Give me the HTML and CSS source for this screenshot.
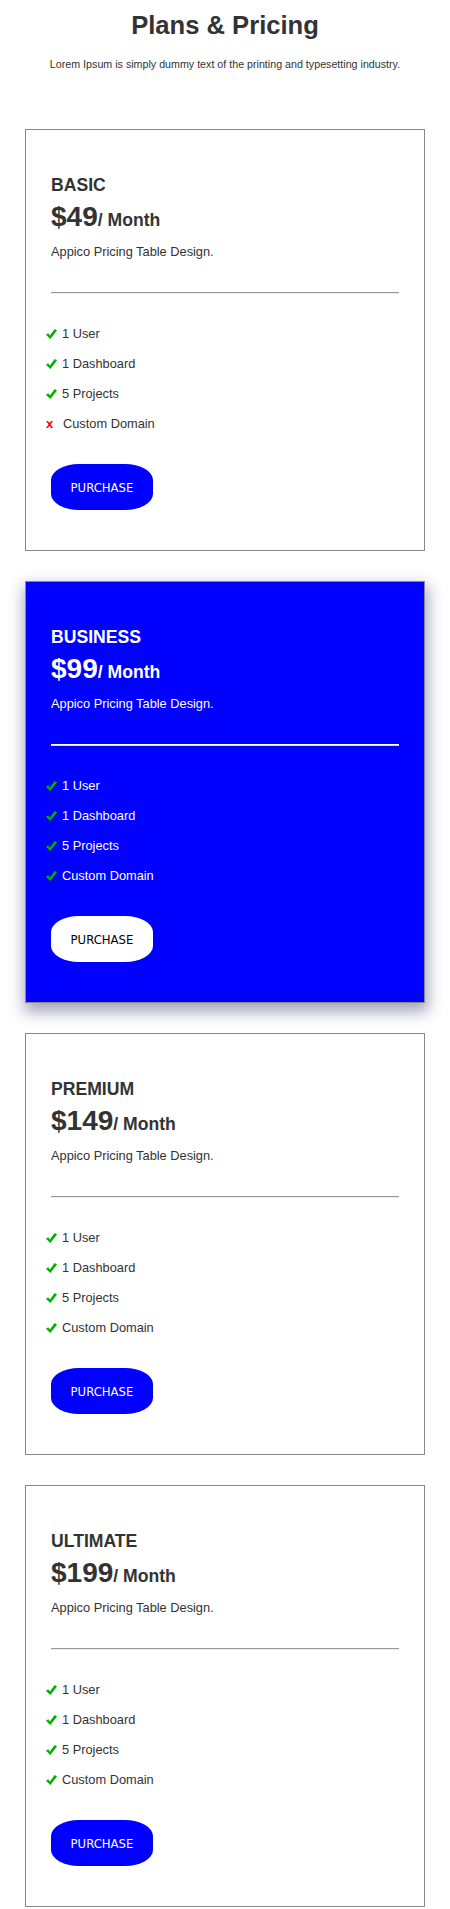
FILE: index.html
```html
<!DOCTYPE html>
<html lang="en">
<head>
<meta charset="utf-8">
<title>Plans &amp; Pricing</title>
<link rel="stylesheet" href="styles.css">
</head>
<body>
<header class="header">
  <h1 class="title">Plans &amp; Pricing</h1>
  <p class="subtitle">Lorem Ipsum is simply dummy text of the printing and typesetting industry.</p>
</header>

<main class="plans">
  <section class="card">
    <h2 class="plan-name">BASIC</h2>
    <div class="price">$49<span class="per">/ Month</span></div>
    <p class="desc">Appico Pricing Table Design.</p>
    <hr class="rule">
    <ul class="features">
      <li><span class="ico"><svg width="11" height="10" viewBox="0 0 11 10"><path d="M0 5.7 L2.2 4.3 L3.9 6.5 L8.7 0 L11 1.5 L4.3 10 Z" fill="#00b000"/></svg></span><span>1 User</span></li>
      <li><span class="ico"><svg width="11" height="10" viewBox="0 0 11 10"><path d="M0 5.7 L2.2 4.3 L3.9 6.5 L8.7 0 L11 1.5 L4.3 10 Z" fill="#00b000"/></svg></span><span>1 Dashboard</span></li>
      <li><span class="ico"><svg width="11" height="10" viewBox="0 0 11 10"><path d="M0 5.7 L2.2 4.3 L3.9 6.5 L8.7 0 L11 1.5 L4.3 10 Z" fill="#00b000"/></svg></span><span>5 Projects</span></li>
      <li><span class="ico no">x</span><span>Custom Domain</span></li>
    </ul>
    <button class="buy">PURCHASE</button>
  </section>

  <section class="card featured">
    <h2 class="plan-name">BUSINESS</h2>
    <div class="price">$99<span class="per">/ Month</span></div>
    <p class="desc">Appico Pricing Table Design.</p>
    <hr class="rule">
    <ul class="features">
      <li><span class="ico"><svg width="11" height="10" viewBox="0 0 11 10"><path d="M0 5.7 L2.2 4.3 L3.9 6.5 L8.7 0 L11 1.5 L4.3 10 Z" fill="#00b000"/></svg></span><span>1 User</span></li>
      <li><span class="ico"><svg width="11" height="10" viewBox="0 0 11 10"><path d="M0 5.7 L2.2 4.3 L3.9 6.5 L8.7 0 L11 1.5 L4.3 10 Z" fill="#00b000"/></svg></span><span>1 Dashboard</span></li>
      <li><span class="ico"><svg width="11" height="10" viewBox="0 0 11 10"><path d="M0 5.7 L2.2 4.3 L3.9 6.5 L8.7 0 L11 1.5 L4.3 10 Z" fill="#00b000"/></svg></span><span>5 Projects</span></li>
      <li><span class="ico"><svg width="11" height="10" viewBox="0 0 11 10"><path d="M0 5.7 L2.2 4.3 L3.9 6.5 L8.7 0 L11 1.5 L4.3 10 Z" fill="#00b000"/></svg></span><span>Custom Domain</span></li>
    </ul>
    <button class="buy">PURCHASE</button>
  </section>

  <section class="card">
    <h2 class="plan-name">PREMIUM</h2>
    <div class="price">$149<span class="per">/ Month</span></div>
    <p class="desc">Appico Pricing Table Design.</p>
    <hr class="rule">
    <ul class="features">
      <li><span class="ico"><svg width="11" height="10" viewBox="0 0 11 10"><path d="M0 5.7 L2.2 4.3 L3.9 6.5 L8.7 0 L11 1.5 L4.3 10 Z" fill="#00b000"/></svg></span><span>1 User</span></li>
      <li><span class="ico"><svg width="11" height="10" viewBox="0 0 11 10"><path d="M0 5.7 L2.2 4.3 L3.9 6.5 L8.7 0 L11 1.5 L4.3 10 Z" fill="#00b000"/></svg></span><span>1 Dashboard</span></li>
      <li><span class="ico"><svg width="11" height="10" viewBox="0 0 11 10"><path d="M0 5.7 L2.2 4.3 L3.9 6.5 L8.7 0 L11 1.5 L4.3 10 Z" fill="#00b000"/></svg></span><span>5 Projects</span></li>
      <li><span class="ico"><svg width="11" height="10" viewBox="0 0 11 10"><path d="M0 5.7 L2.2 4.3 L3.9 6.5 L8.7 0 L11 1.5 L4.3 10 Z" fill="#00b000"/></svg></span><span>Custom Domain</span></li>
    </ul>
    <button class="buy">PURCHASE</button>
  </section>

  <section class="card">
    <h2 class="plan-name">ULTIMATE</h2>
    <div class="price">$199<span class="per">/ Month</span></div>
    <p class="desc">Appico Pricing Table Design.</p>
    <hr class="rule">
    <ul class="features">
      <li><span class="ico"><svg width="11" height="10" viewBox="0 0 11 10"><path d="M0 5.7 L2.2 4.3 L3.9 6.5 L8.7 0 L11 1.5 L4.3 10 Z" fill="#00b000"/></svg></span><span>1 User</span></li>
      <li><span class="ico"><svg width="11" height="10" viewBox="0 0 11 10"><path d="M0 5.7 L2.2 4.3 L3.9 6.5 L8.7 0 L11 1.5 L4.3 10 Z" fill="#00b000"/></svg></span><span>1 Dashboard</span></li>
      <li><span class="ico"><svg width="11" height="10" viewBox="0 0 11 10"><path d="M0 5.7 L2.2 4.3 L3.9 6.5 L8.7 0 L11 1.5 L4.3 10 Z" fill="#00b000"/></svg></span><span>5 Projects</span></li>
      <li><span class="ico"><svg width="11" height="10" viewBox="0 0 11 10"><path d="M0 5.7 L2.2 4.3 L3.9 6.5 L8.7 0 L11 1.5 L4.3 10 Z" fill="#00b000"/></svg></span><span>Custom Domain</span></li>
    </ul>
    <button class="buy">PURCHASE</button>
  </section>
</main>
</body>
</html>
```

FILE: styles.css
```css
* { box-sizing: border-box; }

body {
  margin: 0;
  background: #fff;
  color: #333;
  font-family: "Liberation Sans", Arial, sans-serif;
}

.header {
  padding-top: 10.7px;
  text-align: center;
}

.title {
  margin: 0;
  font-size: 25.6px;
  font-weight: bold;
  line-height: normal;
}

.subtitle {
  margin: 18.5px 0 0;
  font-size: 10.7px;
  line-height: normal;
}

.plans {
  display: flex;
  flex-direction: column;
  align-items: center;
  gap: 30px;
  padding-top: 59px;
}

.card {
  width: 400px;
  border: 1px solid #888;
  padding: 45px 25px 40px;
  background: #fff;
}

.card.featured {
  background: #0000ff;
  color: #fff;
  box-shadow: 1px 7px 14px 2px rgba(30, 30, 90, 0.4);
}

.plan-name {
  margin: 0;
  font-size: 17.6px;
  font-weight: bold;
  line-height: normal;
}

.price {
  margin-top: 5px;
  font-size: 28px;
  font-weight: bold;
  line-height: normal;
}

.per {
  font-size: 17.6px;
}

.desc {
  margin: 11px 0 0;
  font-size: 12.8px;
  line-height: normal;
}

.rule {
  margin: 33px 0 0;
  height: 0;
  border: 0;
  border-top: 1px solid #9a9a9a;
  border-bottom: 1px solid #ececec;
}

.featured .rule {
  border-top-color: #fff;
  border-bottom-color: #d8d8f0;
}

.features {
  list-style: none;
  margin: 24.6px 0 0 -5px;
  padding: 0;
}

.features li {
  font-size: 12.8px;
  line-height: 30px;
  height: 30px;
}

.ico {
  display: inline-block;
  width: 11px;
  margin-right: 5px;
}

.ico svg {
  vertical-align: -1px;
}

.ico.no {
  width: 12px;
  color: #f00;
  font-weight: bold;
  font-size: 13px;
}

.buy {
  display: block;
  margin-top: 25.4px;
  width: 102px;
  height: 46px;
  padding: 0;
  border: 0;
  border-radius: 28px / 16px;
  background: #0000ff;
  color: #fff;
  font-family: "DejaVu Sans Condensed", "DejaVu Sans", sans-serif;
  font-size: 13px;
}

.featured .buy {
  background: #fff;
  color: #000;
}
```
